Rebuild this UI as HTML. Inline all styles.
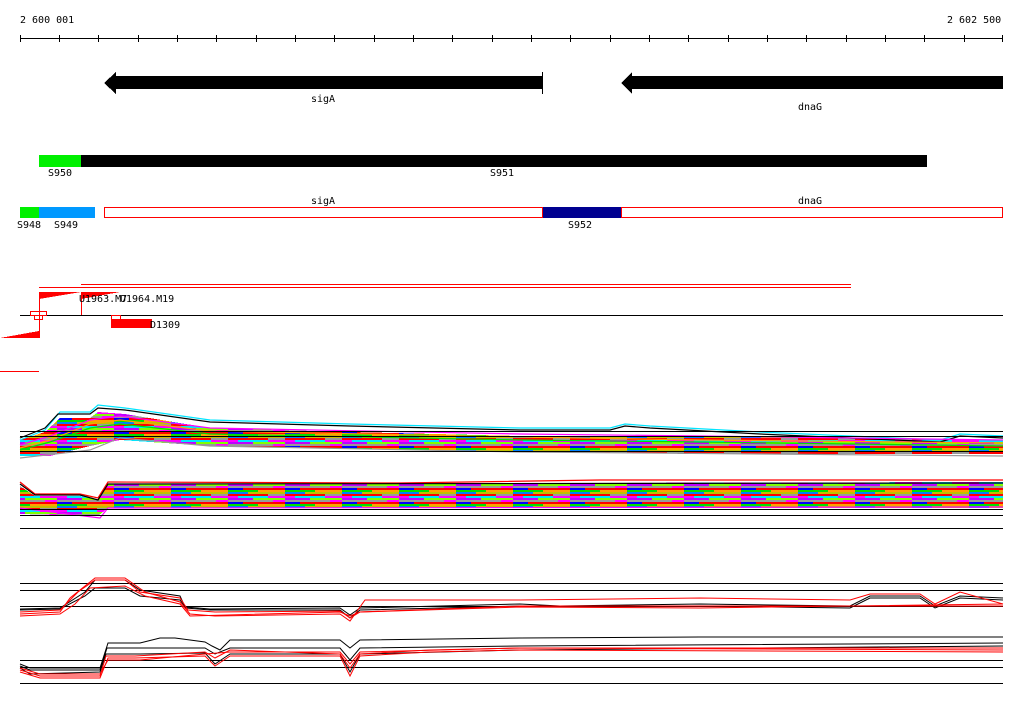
<!DOCTYPE html>
<html><head><meta charset="utf-8"><style>
html,body{margin:0;padding:0;background:#fff;width:1024px;height:714px;overflow:hidden}
svg{display:block}
text{font-family:"DejaVu Sans Mono","Liberation Mono",monospace;font-size:10px;fill:#000}
</style></head><body>
<svg width="1024" height="714" viewBox="0 0 1024 714" xmlns="http://www.w3.org/2000/svg" shape-rendering="crispEdges">
<defs>
<pattern id="st" x="0" y="0" width="57" height="14" patternUnits="userSpaceOnUse">
<rect width="57" height="14" fill="#ff00ff"/>
<rect x="0" y="0" width="30" height="2" fill="#00e000"/>
<rect x="30" y="0" width="27" height="2" fill="#ffa000"/>
<rect x="0" y="2" width="20" height="2" fill="#0080ff"/>
<rect x="20" y="2" width="37" height="2" fill="#c0c000"/>
<rect x="0" y="4" width="40" height="2" fill="#f00"/>
<rect x="40" y="4" width="17" height="2" fill="#999"/>
<rect x="10" y="6" width="30" height="2" fill="#00e5ff"/>
<rect x="0" y="8" width="25" height="2" fill="#c000ff"/>
<rect x="25" y="8" width="32" height="2" fill="#80ff00"/>
<rect x="0" y="10" width="45" height="2" fill="#999"/>
<rect x="0" y="12" width="15" height="2" fill="#0000ff"/>
<rect x="15" y="12" width="42" height="2" fill="#ff0000"/>
</pattern>
</defs>
<text x="20" y="23">2 600 001</text>
<text x="947" y="23">2 602 500</text>
<line x1="20" y1="38.5" x2="1003" y2="38.5" stroke="#000"/>
<g stroke="#000">
<line x1="20.5" y1="35" x2="20.5" y2="42"/><line x1="59.5" y1="35" x2="59.5" y2="42"/><line x1="98.5" y1="35" x2="98.5" y2="42"/><line x1="138.5" y1="35" x2="138.5" y2="42"/><line x1="177.5" y1="35" x2="177.5" y2="42"/><line x1="216.5" y1="35" x2="216.5" y2="42"/><line x1="256.5" y1="35" x2="256.5" y2="42"/><line x1="295.5" y1="35" x2="295.5" y2="42"/><line x1="334.5" y1="35" x2="334.5" y2="42"/><line x1="374.5" y1="35" x2="374.5" y2="42"/><line x1="413.5" y1="35" x2="413.5" y2="42"/><line x1="452.5" y1="35" x2="452.5" y2="42"/><line x1="492.5" y1="35" x2="492.5" y2="42"/><line x1="531.5" y1="35" x2="531.5" y2="42"/><line x1="570.5" y1="35" x2="570.5" y2="42"/><line x1="610.5" y1="35" x2="610.5" y2="42"/><line x1="649.5" y1="35" x2="649.5" y2="42"/><line x1="688.5" y1="35" x2="688.5" y2="42"/><line x1="728.5" y1="35" x2="728.5" y2="42"/><line x1="767.5" y1="35" x2="767.5" y2="42"/><line x1="806.5" y1="35" x2="806.5" y2="42"/><line x1="846.5" y1="35" x2="846.5" y2="42"/><line x1="885.5" y1="35" x2="885.5" y2="42"/><line x1="924.5" y1="35" x2="924.5" y2="42"/><line x1="964.5" y1="35" x2="964.5" y2="42"/><line x1="1002.5" y1="35" x2="1002.5" y2="42"/>
</g>
<polygon points="104,83 116,72 116,76 542,76 542,89 116,89 116,94" fill="#000"/>
<line x1="542.5" y1="72" x2="542.5" y2="94" stroke="#000"/>
<polygon points="621,83 632,72 632,76 1003,76 1003,89 632,89 632,94" fill="#000"/>
<text x="311" y="102">sigA</text>
<text x="798" y="110">dnaG</text>
<rect x="39" y="155" width="42" height="12" fill="#00f000"/>
<rect x="81" y="155" width="846" height="12" fill="#000"/>
<text x="48" y="176">S950</text>
<text x="490" y="176">S951</text>
<text x="311" y="204">sigA</text>
<text x="798" y="204">dnaG</text>
<rect x="20" y="207" width="19" height="11" fill="#00f000"/>
<rect x="39" y="207" width="56" height="11" fill="#0099ff"/>
<rect x="104.5" y="207.5" width="898" height="10" fill="none" stroke="#f00"/>
<rect x="543" y="207" width="78" height="11" fill="#000090"/>
<line x1="542.5" y1="207" x2="542.5" y2="218" stroke="#f00"/>
<line x1="621.5" y1="207" x2="621.5" y2="218" stroke="#f00"/>
<text x="17" y="228">S948</text>
<text x="54" y="228">S949</text>
<text x="568" y="228">S952</text>
<line x1="81" y1="284.5" x2="851" y2="284.5" stroke="#f00"/>
<line x1="39" y1="287.5" x2="851" y2="287.5" stroke="#f00"/>
<polygon points="39,292 81,292 39,299" fill="#f00"/>
<polygon points="81,292 120,292 81,299" fill="#f00"/>
<line x1="39.5" y1="292" x2="39.5" y2="338" stroke="#f00"/>
<line x1="81.5" y1="292" x2="81.5" y2="315" stroke="#f00"/>
<line x1="20" y1="315.5" x2="1003" y2="315.5" stroke="#000"/>
<rect x="30.5" y="311.5" width="16" height="4" fill="none" stroke="#f00"/>
<rect x="34.5" y="315.5" width="8" height="4" fill="none" stroke="#f00"/>
<polygon points="0,338 39,331 39,338" fill="#f00"/>
<line x1="0" y1="371.5" x2="39" y2="371.5" stroke="#f00"/>
<rect x="111.5" y="315.5" width="9" height="4" fill="none" stroke="#f00"/>
<rect x="111" y="319" width="41" height="9" fill="#f00"/>
<text x="79" y="302">U1963.M7</text>
<text x="120" y="302">U1964.M19</text>
<text x="150" y="328">D1309</text>
<!-- section 1 -->
<polygon points="20,456 20,440 45,432 60,418 90,418 98,412 125,414 210,428 350,432 520,436 700,436 1003,440 1003,454 700,454 520,452 210,446 120,440 90,446 50,456" fill="url(#st)"/>
<g shape-rendering="auto" fill="none" stroke-width="1.2">
<polyline points="20,440 45,430 60,412 90,412 98,405 125,408 210,420 350,424 520,428 610,428 625,424 650,426 760,432 940,440 960,434 1003,436" stroke="#00e5ff"/>
<polyline points="20,438 45,428 58,414 90,414 98,408 125,410 210,422 350,426 520,430 610,430 625,426 650,428 760,434 940,442 960,436 1003,438" stroke="#000"/>
<polyline points="20,445 50,436 90,420 120,416 210,428 520,434 700,436 1003,440" stroke="#ff00ff"/>
<polyline points="20,448 50,440 90,424 120,420 210,431 520,437 700,440 1003,443" stroke="#ffa000"/>
<polyline points="20,450 50,442 90,428 120,424 210,434 520,440 700,442 1003,446" stroke="#00e000"/>
<polyline points="20,458 90,450 120,438 210,446 520,452 1003,456" stroke="#999"/>
</g>
<g stroke-width="1">
<line x1="20" y1="431.5" x2="1003" y2="431.5" stroke="#000"/>
<line x1="20" y1="436.5" x2="1003" y2="436.5" stroke="#000"/>
<line x1="20" y1="451.5" x2="1003" y2="451.5" stroke="#000"/>
</g>
<!-- section 2 -->
<polygon points="20,486 35,496 80,496 98,500 108,484 1003,482 1003,508 108,508 98,516 20,514" fill="url(#st)"/>
<g fill="none" stroke-width="1.2" shape-rendering="auto">
<polyline points="20,482 35,494 80,494 98,498 108,482 400,483 600,480 1003,480" stroke="#f00"/>
<polyline points="20,484 35,495 80,495 98,500 108,484 1003,483" stroke="#000"/>
<polyline points="20,508 100,518 108,508 1003,507" stroke="#ff00ff"/>
</g>
<g stroke="#000">
<line x1="20" y1="509.5" x2="1003" y2="509.5"/>
<line x1="20" y1="515.5" x2="1003" y2="515.5"/>
<line x1="20" y1="528.5" x2="1003" y2="528.5"/>
</g>
<g stroke="#000">
<line x1="20" y1="583.5" x2="1003" y2="583.5"/>
<line x1="20" y1="590.5" x2="1003" y2="590.5"/>
<line x1="20" y1="606.5" x2="1003" y2="606.5"/>
<line x1="20" y1="660.5" x2="1003" y2="660.5"/>
<line x1="20" y1="667.5" x2="1003" y2="667.5"/>
<line x1="20" y1="683.5" x2="1003" y2="683.5"/>
</g>
<g fill="none" shape-rendering="auto" stroke-width="1">
<polyline points="20,609 60,608 85,592 95,580 125,580 140,590 180,596 185,607 210,609 340,608 350,615 360,608 520,604 560,606 700,604 850,606 870,596 920,596 935,606 960,596 1003,598" stroke="#000"/>
<polyline points="20,610 60,609 85,596 95,588 125,588 140,596 180,600 186,608 210,610 340,610 350,618 360,610 520,606 700,606 850,608 870,598 920,598 935,608 960,598 1003,600" stroke="#000"/>
<polyline points="20,612 60,610 78,592 95,580 125,580 140,592 180,598 188,610 215,612 340,611 350,618 360,612 520,607 700,608 1003,604" stroke="#f00"/>
<polyline points="20,614 60,612 70,598 95,578 125,578 145,592 180,602 190,614 215,616 340,614 350,621 365,600 520,600 700,598 850,600 870,594 920,594 935,604 960,592 1003,604" stroke="#f00"/>
<polyline points="20,616 60,614 75,604 90,588 125,586 145,596 180,604 190,616 340,612 350,616 360,612 520,606 1003,606" stroke="#f00"/>
</g>
<g fill="none" shape-rendering="auto" stroke-width="1">
<polyline points="20,664 30,668 100,668 108,643 140,643 160,638 175,638 205,642 212,646 220,650 230,640 340,640 350,648 360,640 520,638 700,637 1003,637" stroke="#000"/>
<polyline points="20,666 30,670 100,670 107,648 140,648 205,648 215,654 230,648 340,648 350,660 360,648 520,646 1003,643" stroke="#000"/>
<polyline points="20,668 30,674 100,672 106,654 140,654 205,653 215,664 230,654 340,654 350,672 360,654 520,650 1003,646" stroke="#000"/>
<polyline points="20,670 40,676 100,676 106,656 135,656 205,652 215,658 230,650 340,654 350,668 360,654 430,650 520,648 1003,650" stroke="#f00"/>
<polyline points="20,672 40,678 100,678 108,658 135,658 205,656 215,666 230,656 340,656 350,676 360,656 430,652 520,650 1003,652" stroke="#f00"/>
<polyline points="20,668 40,674 100,674 108,660 140,660 205,654 230,652 340,652 350,664 360,652 520,648 1003,648" stroke="#f00"/>
</g>
</svg>
</body></html>
